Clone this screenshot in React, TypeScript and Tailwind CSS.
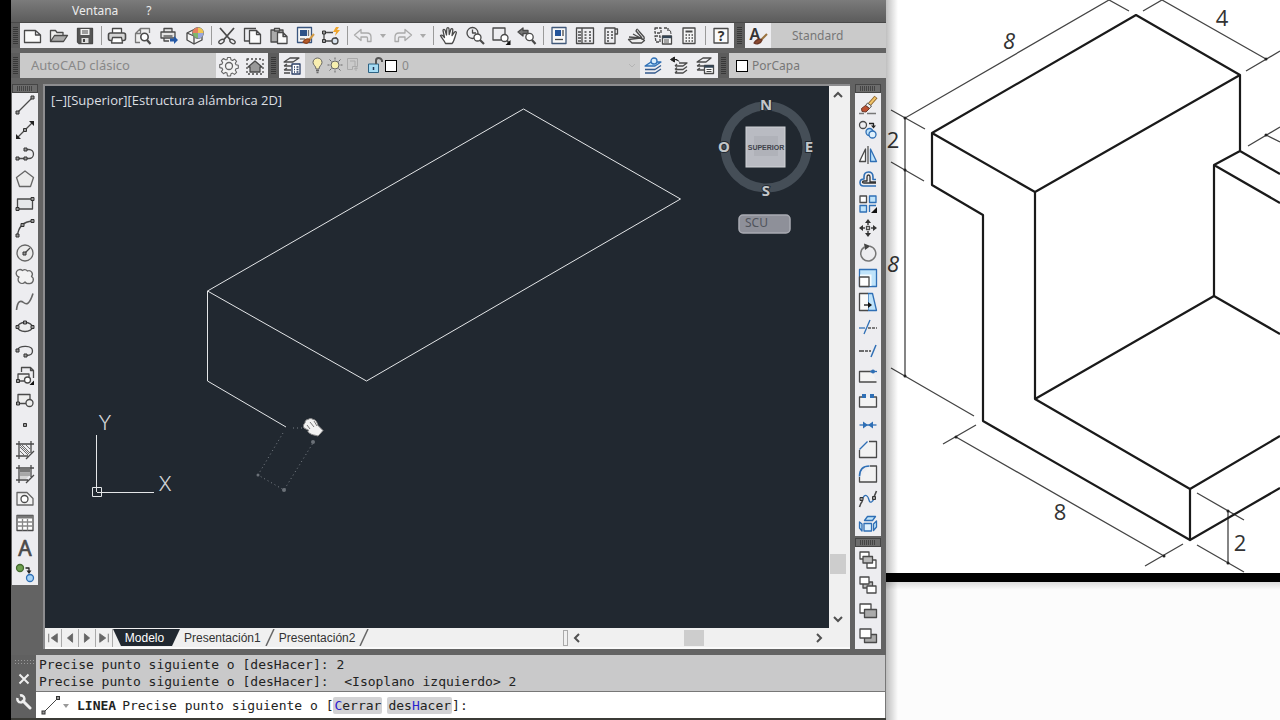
import type { ReactNode } from "react";
import clsx from "clsx";

type Tool = {
  label: string;
  icon: ReactNode;
};

const ink = "#4a4a4a";
const blue = "#2f6fb5";
const sky = "#bfe3fa";

function Node({ x, y }: { x: number; y: number }) {
  return <rect x={x - 1.5} y={y - 1.5} width="3" height="3" fill="#999" stroke="#333" strokeWidth="1" />;
}

function Icon({ children }: { children: ReactNode }) {
  return (
    <svg
      aria-hidden="true"
      viewBox="0 0 20 20"
      className="size-5 shrink-0 overflow-visible"
      fill="none"
      stroke={ink}
      strokeWidth="1.3"
      strokeLinejoin="round"
    >
      {children}
    </svg>
  );
}

const fileTools: Tool[] = [
  {
    label: "Nuevo",
    icon: <path d="M1.500 4.500h11l5 4.500v7.500h-16zM12.500 4.500V9h5" fill="#fafafa" />,
  },
  {
    label: "Abrir",
    icon: (
      <>
        <path d="M1.500 15.500v-11h5l1.500 2h6v3" fill="#eee" />
        <path d="M1.500 15.500l4-6h13l-4 6z" fill="#aaa" />
      </>
    ),
  },
  {
    label: "Guardar",
    icon: (
      <>
        <path d="M2.500 2.500h15v15H4l-1.500-1.500z" fill="#555" />
        <path d="M5.500 3h9v6h-9z" fill="#eee" stroke="none" />
        <path d="M7 5h6M7 7h6" strokeWidth="1" />
        <path d="M6.500 12h7v5h-7z" fill="#ddd" stroke="none" />
        <path d="M8 13h2v3H8z" fill="#444" stroke="none" />
      </>
    ),
  },
];

const printTools: Tool[] = [
  {
    label: "Trazar",
    icon: (
      <>
        <path d="M5.500 7V2.500h9V7" fill="#fff" />
        <rect x="1.500" y="7" width="17" height="7.500" rx="2" fill="#d5d5d5" strokeWidth="1.600" />
        <path d="M5.500 11.500h9l1 5.500h-11z" fill="#fff" />
      </>
    ),
  },
  {
    label: "Vista preliminar",
    icon: (
      <>
        <path d="M7 16.500H2.500v-9l5-5h9V7M2.500 7.500h5v-5" fill="#eee" stroke="#777" />
        <circle cx="11.500" cy="11" r="3.700" fill="#fff" strokeWidth="1.600" />
        <path d="M14 14l3.500 4" strokeWidth="2.200" />
      </>
    ),
  },
  {
    label: "Publicar",
    icon: (
      <>
        <path d="M5 6V2.500h8V6M2 6h14v6H2zM5 12v3h5" fill="#e4e4e4" />
        <path d="M4.500 10h9" />
        <path d="M11 12.500h4V10l4 4-4 4v-2.500h-4z" fill="#2458a6" stroke="none" />
      </>
    ),
  },
  {
    label: "3DDWF",
    icon: (
      <>
        <path d="M2 7l8-4 7 4v7l-8 4-7-4z" fill="#f4f4f4" />
        <path d="M2 7l7 3v8" />
        <circle cx="13" cy="7" r="5.500" fill="#7fb86a" strokeWidth="1" stroke="#777" />
        <path d="M13 7V1.500A5.500 5.500 0 0118.500 7z" fill="#f0c552" stroke="none" />
        <path d="M13 7H7.500A5.500 5.500 0 0113 1.500z" fill="#e77e60" stroke="none" />
        <path d="M13 7h5.500a5.500 5.500 0 01-5.500 5.500z" fill="#9aa6dc" stroke="none" />
      </>
    ),
  },
];

const editTools: Tool[] = [
  {
    label: "Cortar",
    icon: (
      <>
        <path d="M3 2l10.500 12M17 2L6.500 14" strokeWidth="1.800" />
        <ellipse cx="4.500" cy="15.500" rx="3" ry="1.800" transform="rotate(-35 4.500 15.500)" />
        <ellipse cx="15.500" cy="15.500" rx="3" ry="1.800" transform="rotate(35 15.500 15.500)" />
      </>
    ),
  },
  {
    label: "Copiar",
    icon: (
      <>
        <path d="M6 15H1.500V2.500H13" />
        <path d="M6.500 4.500h7l4 4v9h-11zM13.500 4.500v4h4" fill="#fafafa" />
      </>
    ),
  },
  {
    label: "Pegar",
    icon: (
      <>
        <path d="M2 4h12v12H2z" fill="#aaa" />
        <path d="M5.500 2.500h5V5h-5z" fill="#ddd" />
        <path d="M8.500 6.500h5.500l4 4v7H8.500zM14 6.500v4h4" fill="#fafafa" />
      </>
    ),
  },
  {
    label: "Igualar propiedades",
    icon: (
      <>
        <path d="M2.500 1.500h14v15h-14z" fill="#f5f5f5" stroke="#3a567f" />
        <path d="M5 4h7v6H5z" fill="#2e5288" stroke="none" />
        <path d="M13.500 4v6M5 13h5" stroke="#777" />
        <path d="M19 8l-5 6" stroke="#d39a42" strokeWidth="2" />
        <path d="M8 16c2-3 5-4 7-2-1 3-4 4.500-7 2z" fill="#b85d2b" stroke="#91451d" />
      </>
    ),
  },
  {
    label: "Editor de bloques",
    icon: (
      <>
        <path d="M3 15V6.500h9M3 15h9M15 11v2" />
        <Node x={3} y={6.500} />
        <Node x={3} y={15} />
        <circle cx="14" cy="15" r="3" fill="#d9e4ee" />
        <path d="M15 1l-3 5h3l-1 4 5-6h-3l2-3z" fill="#f0a52c" stroke="none" />
      </>
    ),
  },
];

const undoIcon = <path d="M1.500 9l6.500-5.500V7h6q4 0 4 4v4.500h-3.500V12q0-1-1-1H8v3.500z" stroke="#aaa" />;
const redoIcon = <path d="M18.500 9L12 3.500V7H6q-4 0-4 4v4.500h3.500V12q0-1 1-1H12v3.500z" stroke="#aaa" />;

const viewTools: Tool[] = [
  {
    label: "Encuadre",
    icon: (
      <path
        d="M6.500 17.500C5 14 2.500 12 1.500 9.500c1-1 2.500 0 4 2L4 4.500c0-1.500 1.800-1.500 2.200 0L7.500 9 7.800 2.800c.2-1.500 2-1.500 2.200 0l.2 5.700 1.600-5c.5-1.500 2.200-1 2 .5L13 9.500l2.500-3.500c1-1 2.300 0 1.700 1.200C16 10 15.500 15 13 17.500z"
        fill="#fff"
      />
    ),
  },
  {
    label: "Zoom en tiempo real",
    icon: (
      <>
        <circle cx="7.500" cy="7" r="5.500" />
        <path d="M7.500 3.500V7H11" />
        <circle cx="12.500" cy="11.500" r="3.500" fill="#fff" />
        <path d="M15 14l4 4" strokeWidth="2.200" />
      </>
    ),
  },
  {
    label: "Zoom ventana",
    icon: (
      <>
        <path d="M2 2h12v12H2z" />
        <circle cx="13.500" cy="12" r="3.500" fill="#fff" />
        <path d="M16 14.500l1.500 2" strokeWidth="2" />
        <path d="M19.500 14v5h-5z" fill="#111" stroke="none" />
      </>
    ),
  },
  {
    label: "Zoom previo",
    icon: (
      <>
        <path d="M1 6l5-4v2.500h5v3H6V10z" fill="#777" />
        <circle cx="12.500" cy="11" r="3.700" fill="#fff" />
        <path d="M15 14l3.500 4" strokeWidth="2.200" />
      </>
    ),
  },
];

const paletteTools: Tool[] = [
  {
    label: "Propiedades",
    icon: (
      <>
        <path d="M3 1.500h14v16H3z" fill="#f8f8f8" stroke="#41597a" />
        <path d="M6 4h6v6H6z" fill="#23549a" stroke="none" />
        <path d="M14 4v6" />
        <path d="M6 13.500h8" />
      </>
    ),
  },
  {
    label: "DesignCenter",
    icon: (
      <>
        <path d="M1.500 2h17v15.500h-17zM7 2v15.500" />
        <path d="M3 6h3M3 9h3M3 12h3M3 15h3M9.500 6h2M9.500 9h2M9.500 12h2M9.500 15h2M14 6h2M14 9h2M14 12h2M14 15h2" strokeWidth="1.600" />
      </>
    ),
  },
  {
    label: "Paletas de herramientas",
    icon: (
      <>
        <path d="M4 2h10v15.500H4zM14 3h2.500v5H14" />
        <path d="M6 6h2M10 6h2M6 9h2M10 9h2M6 12h2M10 12h2M6 15h2" />
      </>
    ),
  },
  {
    label: "Conjuntos de planos",
    icon: (
      <>
        <path d="M1.500 13.500l12-1.500 4 2.500-3 2.500H5z" fill="#eee" />
        <path d="M2 11l12 1M6 8l9 5M10 3l7 8q1 3-2 2l-5-3" />
        <path d="M10 3l-1 2 6 7" fill="#ccc" />
      </>
    ),
  },
  {
    label: "Marcas de revisión",
    icon: (
      <>
        <path d="M2 2h6v5H2zM11 2h4v4M2 10h5v6H3z" strokeDasharray="3 1" />
        <path d="M9.500 10h9v8h-9z" fill="#fff" />
        <path d="M9.500 11h9" strokeWidth="2.500" stroke="#345" />
        <path d="M11 14h5M11 16h5M16 4q2 0 2 4" strokeWidth="1" />
      </>
    ),
  },
  {
    label: "Calculadora",
    icon: (
      <>
        <path d="M4 2h12v15.500H4z" fill="#f5f5f5" />
        <path d="M6.500 5.500h7" strokeWidth="2" />
        <path d="M6.500 9h1.500M9.500 9h1.500M12.500 9h1.500M6.500 12h1.500M9.500 12h1.500M12.500 12h1.500M6.500 15h1.500M9.500 15h1.500M12.500 15h1.500" strokeWidth="1.600" />
      </>
    ),
  },
];

const layerTools: Tool[] = [
  {
    label: "Definir capa actual",
    icon: (
      <>
        <path d="M2 10h10l6-4H8z" fill={sky} stroke={blue} />
        <path d="M2 13.500h10l6-4M2 17h10l6-4" stroke="#345a8c" />
        <circle cx="11" cy="5" r="3" fill="#d8ecfb" stroke={blue} />
      </>
    ),
  },
  {
    label: "Capa previa",
    icon: (
      <>
        <path d="M6 10h8l4-3h-8M6 10l2-2M6 13.500h8l4-3M6 13.500l2-2M6 17h8l4-3M6 17l2-2" />
        <path d="M1.500 3.500l4-2.500v5zM5 3.500h3l2 2" fill="#222" stroke="#222" strokeWidth="1" />
      </>
    ),
  },
  {
    label: "Estados de capa",
    icon: (
      <>
        <path d="M2 6h9l5-4H8zM2 10h8M2 10l3-2M2 14h7M2 14l3-2" />
        <path d="M9.500 9.500h9v8h-9z" fill="#fff" />
        <path d="M9.500 10.500h9" strokeWidth="2.500" stroke="#345" />
        <path d="M11.500 13.500h5M11.500 15.500h5" strokeWidth="1" />
      </>
    ),
  },
];

const drawTools: Tool[] = [
  {
    label: "Línea",
    icon: (
      <>
        <path d="M2.500 17.500l15-15" />
        <Node x={2.500} y={17.500} />
        <Node x={17.500} y={2.500} />
      </>
    ),
  },
  {
    label: "Línea auxiliar",
    icon: (
      <>
        <path d="M3 17L17 3" />
        <path d="M1 19v-5l5 5zM19 1h-5l5 5z" fill="#222" stroke="none" />
        <Node x={10} y={10} />
      </>
    ),
  },
  {
    label: "Polilínea",
    icon: (
      <>
        <path d="M2.500 14.500h9M11 5.500h3a4.500 4.500 0 010 9h-3" />
        <Node x={2.500} y={14.500} />
        <Node x={10.500} y={14.500} />
        <Node x={10.500} y={5.500} />
      </>
    ),
  },
  { label: "Polígono", icon: <path d="M10 2l8.500 6.500-3 9h-11l-3-9z" fill="#ececec" stroke="#666" /> },
  {
    label: "Rectángulo",
    icon: (
      <>
        <path d="M2.500 5h15v10h-15z" fill="#e6e8ea" />
        <Node x={2.500} y={15} />
        <Node x={17.500} y={5} />
      </>
    ),
  },
  {
    label: "Arco",
    icon: (
      <>
        <path d="M2.500 17.500Q4 4 17.500 3" />
        <Node x={2.500} y={17.500} />
        <Node x={7.500} y={7} />
        <Node x={17.500} y={3} />
      </>
    ),
  },
  {
    label: "Círculo",
    icon: (
      <>
        <circle cx="10" cy="10" r="8" fill="#ebebeb" stroke="#666" />
        <path d="M10 10l5-5" />
        <Node x={9.500} y={10.500} />
      </>
    ),
  },
  {
    label: "Nube de revisión",
    icon: (
      <path
        d="M4 10a3.800 3.800 0 113.500-6.500 3.800 3.800 0 015 .5 3.500 3.500 0 014 5.500 3.800 3.800 0 01-2.500 7 3.800 3.800 0 01-4-1.500A3.800 3.800 0 114 10z"
        fill="#f3f3f3"
        stroke="#666"
      />
    ),
  },
  { label: "Spline", icon: <path d="M1.500 18c1-9 4-10 7-7.500s6 2 9.500-9" stroke="#666" strokeWidth="1.600" /> },
  {
    label: "Elipse",
    icon: (
      <>
        <ellipse cx="10" cy="10" rx="7.500" ry="4.500" fill="#eee" />
        <Node x={2.500} y={10} />
        <Node x={17.500} y={10} />
        <Node x={10} y={5.500} />
      </>
    ),
  },
  {
    label: "Arco elíptico",
    icon: (
      <>
        <path d="M2.500 9c2-5 15-5 15 1 0 3.500-3 4.500-6 4.500" />
        <Node x={2.500} y={9.500} />
        <Node x={10.500} y={14.500} />
      </>
    ),
  },
  {
    label: "Insertar bloque",
    icon: (
      <>
        <path d="M6.500 6V1.500h9l3 3V12M15.500 1.500v3h3" />
        <path d="M3 15V8h11v3M3 15h7" fill="#eee" />
        <Node x={3} y={15} />
        <circle cx="12.500" cy="14" r="3" fill="#fff" />
        <path d="M19 14.500V19h-4.500z" fill="#111" stroke="none" />
      </>
    ),
  },
  {
    label: "Crear bloque",
    icon: (
      <>
        <path d="M3 13.500v-9h12v6M3 13.500h8" fill="#eee" />
        <Node x={3} y={13.500} />
        <circle cx="14.500" cy="13" r="3.500" fill="#eee" />
      </>
    ),
  },
  { label: "Punto", icon: <Node x={10} y={10} /> },
  {
    label: "Sombreado",
    icon: (
      <>
        <path d="M1 4h18M1 16h12M4 1v18M16 1v12" />
        <path d="M5 7l8 8M5 11l4 4M7 5l8 8M11 5l4 4M5 5l9 9" strokeWidth=".8" />
        <path d="M11 19l8-8" />
      </>
    ),
  },
  {
    label: "Degradado",
    icon: (
      <>
        <path d="M5 5h10v3.500H5z" fill="#777" stroke="none" />
        <path d="M5 8.500h10V12H5z" fill="#a8a8a8" stroke="none" />
        <path d="M5 12h9l-3 3H5z" fill="#d5d5d5" stroke="none" />
        <path d="M1 4h18M1 16h12M4 1v18M16 1v12M11 19l8-8" />
      </>
    ),
  },
  {
    label: "Región",
    icon: (
      <>
        <path d="M2 3.500h10l6 6V16H2z" fill="#f2f2f2" stroke="#666" />
        <circle cx="9.500" cy="10" r="3.500" fill="#fff" />
      </>
    ),
  },
  {
    label: "Tabla",
    icon: (
      <>
        <path d="M2 2.500h16v15H2z" fill="#fff" />
        <path d="M2 4h16" strokeWidth="3" stroke="#777" />
        <path d="M2 9h16M2 13h16M7.500 6v11.500M12.500 6v11.500" stroke="#888" />
      </>
    ),
  },
  {
    label: "Texto de líneas múltiples",
    icon: (
      <text x="10" y="18" textAnchor="middle" fill={ink} stroke={ink} strokeWidth=".7" fontSize="21">
        A
      </text>
    ),
  },
  {
    label: "Añadir seleccionado",
    icon: (
      <>
        <circle cx="5" cy="5" r="3.500" fill="#6fa150" stroke="#456b30" />
        <path d="M10.500 5H14v4" stroke="#222" />
        <path d="M11.500 7.500h5L14 11z" fill="#222" stroke="none" />
        <circle cx="15" cy="15" r="3.500" fill="#a9d4f6" stroke={blue} />
      </>
    ),
  },
];

const modifyTools: Tool[] = [
  {
    label: "Borrar",
    icon: (
      <>
        <path d="M18 2l-8 9" stroke="#8d6228" strokeWidth="4" />
        <path d="M17.500 2.500l-7 8" stroke="#f0c46a" strokeWidth="2" />
        <path d="M9.500 8l4 3-2 2.500-4-3z" fill="#eee" stroke="#555" strokeWidth="1" />
        <path d="M7.500 10.500l4 3L8 17l-4-.5-.5-3z" fill="#bd5131" stroke="#6b3828" strokeWidth="1" />
        <path d="M1 18.500h5M9 18.500h9" stroke="#777" />
      </>
    ),
  },
  {
    label: "Copiar objetos",
    icon: (
      <>
        <circle cx="5" cy="5" r="3.500" />
        <path d="M11 3.500h4.500V6" stroke="#222" />
        <path d="M13 5.500h5l-2.500 3z" fill="#222" stroke="none" />
        <circle cx="11.500" cy="12" r="3.500" fill={sky} stroke={blue} />
        <circle cx="14.500" cy="14.500" r="3.500" fill="#e0f1fd" stroke={blue} />
      </>
    ),
  },
  {
    label: "Simetría",
    icon: (
      <>
        <path d="M7.500 4v12.500h-6z" fill="#fff" />
        <path d="M10 1v18" stroke="#555" />
        <path d="M12.500 4v12.500h6z" fill={sky} stroke={blue} />
      </>
    ),
  },
  {
    label: "Desfase",
    icon: (
      <>
        <path d="M18 17H5.500Q2 17 2 13.500T6 10V8q0-5 4.500-5T15 8v2.500h3" stroke={blue} strokeWidth="1.600" />
        <path d="M18 14H6q-1.500 0-1.500-1T6 12h3V8q0-2 1.500-2T12 8v5h6" stroke="#333" />
      </>
    ),
  },
  {
    label: "Matriz",
    icon: (
      <>
        <path d="M2 2h6.500v6.500H2z" fill="#fff" />
        <path d="M11.500 2H18v6.500h-6.500zM2 11.500h6.500V18H2z" fill={sky} stroke={blue} />
        <path d="M11.500 18v-6.500H18" stroke={blue} />
        <path d="M19 13v6h-6z" fill="#111" stroke="none" />
      </>
    ),
  },
  {
    label: "Desplazar",
    icon: (
      <>
        <path d="M10 4v3M10 13v3M4 10h3M13 10h3" strokeWidth="1.600" />
        <path d="M10 1l3 4H7zM10 19l3-4H7zM1 10l4-3v6zM19 10l-4-3v6z" fill="#333" stroke="none" />
        <path d="M8.500 8.500h3v3h-3z" fill="#fff" />
      </>
    ),
  },
  {
    label: "Girar",
    icon: (
      <>
        <path d="M12 3.200A7.500 7.500 0 116.500 4" stroke="#777" strokeWidth="1.500" />
        <path d="M6 .5L12.500 3 7 7z" fill="#444" stroke="none" />
      </>
    ),
  },
  {
    label: "Escala",
    icon: (
      <>
        <path d="M1.500 1.500h17v17h-17z" fill={sky} stroke={blue} />
        <path d="M2 6.500h11.500V18H2z" fill="#f4fbff" stroke="none" />
        <path d="M1.500 9h9.500v9.500H1.500z" fill="#fff" />
      </>
    ),
  },
  {
    label: "Estirar",
    icon: (
      <>
        <path d="M10 1.500h4.500l4 17H10z" fill={sky} stroke={blue} />
        <path d="M10 1.500H1.500v17H10" fill="#fafafa" />
        <path d="M6 13h5" stroke="#111" />
        <path d="M10 10l4 3-4 3z" fill="#111" stroke="none" />
      </>
    ),
  },
  {
    label: "Recortar",
    icon: (
      <>
        <path d="M6 17l6-14" stroke={blue} />
        <path d="M1 11h6" stroke={blue} />
        <path d="M10 11h9" stroke="#555" strokeDasharray="3 1" />
      </>
    ),
  },
  {
    label: "Alargar",
    icon: (
      <>
        <path d="M1 10h5" strokeWidth="1.600" />
        <path d="M7 10h6" strokeDasharray="3 1" />
        <path d="M13 16l5-12" stroke={blue} strokeWidth="1.500" />
      </>
    ),
  },
  {
    label: "Partir en un punto",
    icon: (
      <>
        <path d="M18.500 16H1.500V5.500H14" fill="#f3f3f3" />
        <path d="M12 5.500h7" stroke={blue} />
        <circle cx="15" cy="5.500" r="2" fill={blue} stroke="none" />
      </>
    ),
  },
  {
    label: "Partir",
    icon: (
      <>
        <path d="M4 6H1.500v10h17V6H16" fill="#f3f3f3" />
        <path d="M4 3h4v4H4zM12 3h4v4h-4z" fill={blue} stroke="none" />
      </>
    ),
  },
  {
    label: "Juntar",
    icon: (
      <>
        <path d="M1.500 10h17" stroke={blue} />
        <path d="M5 6.500l5 3.500-5 3.500zM15 6.500L10 10l5 3.500z" fill={blue} stroke="none" />
      </>
    ),
  },
  {
    label: "Chaflán",
    icon: (
      <>
        <path d="M11 1.500h7.500v16h-17V10" fill="#f2f2f2" />
        <path d="M1.500 9.500l8-8" stroke={blue} />
      </>
    ),
  },
  {
    label: "Empalme",
    icon: (
      <>
        <path d="M12 2h6.500v16h-17v-5" fill="#f2f2f2" />
        <path d="M1.500 12.500C1.500 6 5 2 11.500 2" stroke={blue} strokeWidth="1.600" />
      </>
    ),
  },
  {
    label: "Fusionar curvas",
    icon: (
      <>
        <path d="M4 11c3-8 6-4 7 0s4 2 5-2" stroke={blue} />
        <path d="M1.500 18c1-3 2-5 3-6M16 8l2.500-6" strokeWidth="1.600" />
        <Node x={3.500} y={10} />
        <Node x={16} y={9} />
      </>
    ),
  },
  {
    label: "Descomponer",
    icon: (
      <g stroke={blue} fill={sky}>
        <path d="M6 9.500h7.500V17H6z" fill="#e0f1fd" />
        <path d="M6.500 6.500l3-4h8l-3 4zM15.500 10L18.500 7v6l-3 3.500zM4 10L1.500 8v6L4 17z" />
      </g>
    ),
  },
];

const orderTools: Tool[] = [
  {
    label: "Traer al frente",
    icon: (
      <>
        <path d="M2 2h9v7H2zM9 10h9v8H9z" fill="#fff" />
        <path d="M5 6.500h9.500V13H5z" fill="#bbb" />
      </>
    ),
  },
  {
    label: "Enviar al fondo",
    icon: (
      <>
        <path d="M5 7h9.500v6H5z" fill="#bbb" />
        <path d="M2 2h9v7H2zM9 11h9v7H9z" fill="#fff" />
      </>
    ),
  },
  {
    label: "Poner delante del objeto",
    icon: (
      <>
        <path d="M2 3h11v9H2z" fill="#fff" />
        <path d="M6.500 8.500h12v8h-12z" fill="#aaa" />
      </>
    ),
  },
  {
    label: "Poner detrás del objeto",
    icon: (
      <>
        <path d="M6.500 8.500h12v8h-12z" fill="#aaa" />
        <path d="M2 3h11v9H2z" fill="#fff" />
      </>
    ),
  },
];

function ToolButton({ tool, fill }: { tool: Tool; fill?: boolean }) {
  return (
    <button
      type="button"
      aria-label={tool.label}
      className={clsx("flex w-[26px] items-center justify-center", fill ? "min-h-0 flex-1" : "h-full shrink-0")}
    >
      <Icon>{tool.icon}</Icon>
    </button>
  );
}

function ToolGroup({ tools }: { tools: Tool[] }) {
  return (
    <div className="flex h-full">
      {tools.map((tool) => (
        <ToolButton key={tool.label} tool={tool} />
      ))}
    </div>
  );
}

function Separator() {
  return (
    <div className="flex h-full w-[6px] shrink-0 justify-center py-[3px]">
      <div className="w-px bg-[#9a9a9a]" />
    </div>
  );
}

function Grip({ className }: { className?: string }) {
  return (
    <div className={clsx("flex shrink-0 items-center justify-center bg-[#5c5c5c]", className)}>
      <div className="h-[17px] w-[5px] bg-[repeating-linear-gradient(#383838_0_1px,#5c5c5c_1px_2px)]" />
    </div>
  );
}

function TopGrip() {
  return (
    <div className="flex h-[9px] shrink-0 items-center justify-center border border-[#454545] bg-[#6c6c6c]">
      <div className="h-[5px] w-4 bg-[repeating-linear-gradient(90deg,#444_0_1px,#6c6c6c_1px_2px)]" />
    </div>
  );
}

function HistoryArrow({ label }: { label: string }) {
  return (
    <button type="button" aria-label={label} className="flex h-full w-[14px] shrink-0 items-center justify-center">
      <svg viewBox="0 0 6 4" className="h-1 w-[6px]">
        <path d="M0 0h6L3 4z" fill="#aaa" />
      </svg>
    </button>
  );
}

function MenuBar() {
  return (
    <nav className="flex h-[23px] items-center gap-[28px] border-b border-[#484848] bg-linear-to-b from-[#7b7b7b] to-[#5c5c5c] pl-[61px] text-[12px] leading-5 text-[#ececec]">
      <button type="button">Ventana</button>
      <button type="button">?</button>
    </nav>
  );
}

function StandardToolbar() {
  return (
    <div className="flex h-[25px] bg-[#ededf0]">
      <Grip className="w-[9px]" />
      <ToolGroup tools={fileTools} />
      <Separator />
      <ToolGroup tools={printTools} />
      <Separator />
      <ToolGroup tools={editTools} />
      <Separator />
      <ToolButton tool={{ label: "Deshacer", icon: undoIcon }} />
      <HistoryArrow label="Lista de deshacer" />
      <ToolButton tool={{ label: "Rehacer", icon: redoIcon }} />
      <HistoryArrow label="Lista de rehacer" />
      <Separator />
      <ToolGroup tools={viewTools} />
      <Separator />
      <ToolGroup tools={paletteTools} />
      <Separator />
      <ToolButton
        tool={{
          label: "Ayuda",
          icon: (
            <>
              <path d="M3 2.500h14v14.500H3z" fill="#fafafa" />
              <text x="10" y="15" textAnchor="middle" fontSize="14" fontWeight="700" fill="#333" stroke="none">
                ?
              </text>
            </>
          ),
        }}
      />
      <Grip className="w-[11px]" />
      <ToolButton
        tool={{
          label: "Estilo de texto",
          icon: (
            <>
              <text x="7" y="14" textAnchor="middle" fontSize="16" fontWeight="600" fill="#333" stroke="none">
                A
              </text>
              <path d="M19 8l-6 6" stroke="#9a7340" strokeWidth="2" />
              <path d="M6 17c2-3 5-5 8-3-1 3-5 5-8 3z" fill="#8c4a30" stroke="#6b3828" />
            </>
          ),
        }}
      />
      <select
        aria-label="Estilo de texto actual"
        className="min-w-0 flex-1 appearance-none bg-[#cacaca] pl-[21px] text-[12px] text-[#777]"
      >
        <option>Standard</option>
      </select>
    </div>
  );
}

function LayerToolbar() {
  return (
    <div className="flex h-[25px] bg-[#ededf0]">
      <Grip className="w-[9px]" />
      <select
        aria-label="Espacio de trabajo"
        className="w-[196px] shrink-0 appearance-none bg-[#cacaca] pl-[11px] text-[13px] text-[#888]"
      >
        <option>AutoCAD clásico</option>
      </select>
      <ToolGroup
        tools={[
          {
            label: "Parámetros del espacio de trabajo",
            icon: (
              <>
                <path
                  d="M8.500 1.500h3l.5 2.300 1.500.7 2-1.300 2.100 2.100-1.300 2 .7 1.500 2.300.5v3l-2.300.5-.7 1.500 1.300 2-2.100 2.100-2-1.300-1.500.7-.5 2.200h-3L8 17.100l-1.500-.7-2 1.300-2.100-2.100 1.300-2-.7-1.500-2.300-.5v-3L3 8.100l.7-1.500-1.300-2 2.100-2.100 2 1.300L8 3.800z"
                  fill="#f4f4f4"
                  stroke="#666"
                  strokeWidth="1.100"
                />
                <circle cx="10" cy="10" r="3.500" stroke="#666" />
              </>
            ),
          },
          {
            label: "Mi espacio de trabajo",
            icon: (
              <>
                <path d="M2 3h16v15H2z" strokeDasharray="2 2" />
                <path d="M3 11l7-6 7 6h-2v5H5v-5z" fill="#999" />
              </>
            ),
          },
        ]}
      />
      <Grip className="w-[11px]" />
      <ToolButton
        tool={{
          label: "Propiedades de capas",
          icon: (
            <>
              <path d="M2 6h9l6-4H8zM2 10h8M2 14h7M2 10l3-2M2 14l3-2M2 17h6" />
              <path d="M10 8h8v10h-8z" fill="#fff" stroke="#2b3f66" />
              <path d="M12 11h1M14.500 11h2M12 13.500h1M14.500 13.500h2M12 16h1M14.500 16h2" stroke="#2b3f66" />
            </>
          ),
        }}
      />
      <div className="flex min-w-0 flex-1 items-center bg-[#cacaca] pl-[3px]">
        <svg aria-hidden="true" viewBox="0 0 77 20" className="h-5 w-[77px] shrink-0" fill="none" stroke="#666">
          <path d="M8 13c0-3-3-4-3-6.500a4.500 4.500 0 019 0C14 9 11 10 11 13z" fill="#f8eeb0" />
          <path d="M8 14.500h3M8.500 16.500h2" strokeWidth="1.500" />
          <circle cx="27" cy="9" r="4" fill="#f6efae" />
          <path d="M27 1.500v2M27 14.500v2M19.500 9h2M32.500 9h2M21.500 3.500l2 2M30.500 12.500l2 2M21.500 14.500l2-2M32.500 3.500l-2 2" />
          <path d="M39.500 2.500h10v8h-5v3h-5zM42 5h5v5M48 10v5M46 13l4-1" stroke="#aaa" />
          <path d="M60.500 8h10v8.500h-10z" fill="#a6dcf4" stroke="#2d6384" />
          <path d="M68 8V4.500Q68 2 70.500 2T74 4.500V6" strokeWidth="2" stroke="#555" />
          <path d="M65.500 11v3" stroke="#235" strokeWidth="1.500" />
        </svg>
        <div className="size-3 shrink-0 border border-black bg-white" />
        <select
          aria-label="Capa actual"
          className="h-full min-w-0 flex-1 appearance-none pl-[5px] text-[12px] text-[#888]"
        >
          <option>0</option>
        </select>
        <svg aria-hidden="true" viewBox="0 0 8 5" className="mr-1 h-[5px] w-2" fill="none">
          <path d="M1 1l3 3 3-3" stroke="#b4b4b4" />
        </svg>
      </div>
      <ToolGroup tools={layerTools} />
      <Grip className="w-[11px]" />
      <div className="flex w-[157px] shrink-0 items-center bg-[#cacaca] pl-[7px]">
        <div className="size-3 border border-black bg-white" />
        <select
          aria-label="Color"
          className="h-full min-w-0 flex-1 appearance-none pl-[4px] text-[12px] text-[#777]"
        >
          <option>PorCapa</option>
        </select>
      </div>
    </div>
  );
}

function ViewCube() {
  return (
    <div className="absolute top-2 right-3 w-[100px]">
      <svg viewBox="0 0 100 142" className="w-full font-['Noto_Sans',sans-serif]">
        <circle cx="49" cy="53" r="41" fill="none" stroke="#454e57" strokeWidth="9" />
        <g fill="#c3c6c9" fontSize="15" fontWeight="700" textAnchor="middle" stroke="#212830" strokeWidth="2" paintOrder="stroke">
          <text x="49" y="16">N</text>
          <text x="49" y="102">S</text>
          <text x="7" y="58">O</text>
          <text x="92" y="58">E</text>
        </g>
        <rect x="29" y="33" width="39" height="40" fill="#b9bbc2" stroke="#d0d2d6" />
        <rect x="37" y="42" width="24" height="20" fill="#b0b2b9" />
        <text x="49" y="56" textAnchor="middle" fontSize="7" fontWeight="700" fill="#3f434b" className="font-['Liberation_Sans',sans-serif]">
          SUPERIOR
        </text>
        <rect x="22" y="121" width="51" height="18" rx="4" fill="#8e9099" stroke="#a9abb2" strokeWidth="1.500" />
        <text x="28" y="133" fontSize="12" fill="#50545c">
          SCU
        </text>
      </svg>
    </div>
  );
}

function ModelSpace() {
  return (
    <div className="relative min-w-0 flex-1 overflow-hidden bg-[#212830]">
      <svg aria-hidden="true" className="absolute inset-0 size-full" fill="none" stroke="#e4e6e8" strokeWidth="1">
        <path d="M162.500 205L478.500 23l157 90-314 182zv90l78.500 46" />
        <g stroke="#7a8087" strokeDasharray="1 3">
          <path d="M238 347l-25 42 26 15 29-47M248 342h12" />
        </g>
        <g fill="#6b7178" stroke="none">
          <circle cx="213" cy="389" r="1.500" />
          <circle cx="239" cy="404" r="2" />
          <circle cx="268" cy="356" r="2" />
        </g>
        <path
          d="M260 345c-1-2-.5-4 1-5 0-2 1-3.500 3-3.500 2-1.500 4-1 5 0 3 0 4 3 5 6l5 5c-2 2-3 4-5 5.500-3-1-6-1-8-2.500-2-1-3-3-1-3z"
          transform="translate(-1 -3)"
          fill="#f2f2f2"
          stroke="#888"
        />
        <path d="M262 339l3 4M265 336l4 5M269 335l3 5" stroke="#777" />
        <path d="M47.500 401.500h9v9h-9zM51.500 406V349M52 406.500h57" />
        <g fill="#cfd2d5" stroke="none" fontSize="20" fontWeight="300" className="font-['Inter',sans-serif]">
          <text x="60" y="344" textAnchor="middle">Y</text>
          <text x="120" y="405" textAnchor="middle">X</text>
        </g>
      </svg>
      <p className="relative pt-1 pl-[6px] font-['Open_Sans',sans-serif] text-[13px] leading-5 text-[#dcdfe2]">
        [−][Superior][Estructura alámbrica 2D]
      </p>
      <ViewCube />
    </div>
  );
}

function Chevron({ label, d }: { label: string; d: string }) {
  return (
    <button type="button" aria-label={label} className="flex size-[18px] shrink-0 items-center justify-center">
      <svg viewBox="0 0 10 10" className="size-[10px]" fill="none" stroke="#505050" strokeWidth="2">
        <path d={d} />
      </svg>
    </button>
  );
}

function TabEdge() {
  return (
    <svg aria-hidden="true" viewBox="0 0 10 17" className="h-[17px] w-[10px] shrink-0" fill="none">
      <path d="M1 17L9 0" stroke="#666" strokeWidth="1.500" />
    </svg>
  );
}

const pageButtons = [
  { label: "Primera", d: "M2 2v10M12 2v10L5 7z" },
  { label: "Anterior", d: "M10 2v10L4 7z" },
  { label: "Siguiente", d: "M4 2v10l6-5z" },
  { label: "Última", d: "M12 2v10M2 2v10l7-5z" },
];

function LayoutTabs() {
  return (
    <div className="flex h-[21px] border-b-2 border-[#fafafa] bg-[#f0f0f0] pt-px font-['Liberation_Sans',sans-serif] text-[12px] leading-4 text-[#333]">
      {pageButtons.map((button) => (
        <button
          key={button.label}
          type="button"
          aria-label={button.label}
          className="flex w-[17px] shrink-0 items-center justify-center border-r border-[#aaa]"
        >
          <svg viewBox="0 0 14 14" className="size-3" fill="#666" stroke="#666">
            <path d={button.d} />
          </svg>
        </button>
      ))}
      <button
        type="button"
        className="h-[17px] w-[67px] shrink-0 bg-[#212830] pr-1 text-center text-white [clip-path:polygon(0_0,100%_0,calc(100%-8px)_100%,8px_100%)]"
      >
        Modelo
      </button>
      <div className="flex h-[17px] items-center">
        <button type="button" className="px-1">
          Presentación1
        </button>
        <TabEdge />
        <button type="button" className="px-1">
          Presentación2
        </button>
        <TabEdge />
      </div>
      <div className="flex-1" />
      <div className="flex w-[287px] shrink-0 items-center">
        <div className="h-4 w-[5px] border border-[#aaa]" />
        <Chevron label="Desplazar a la izquierda" d="M7 1L3 5l4 4" />
        <div className="flex h-4 flex-1 justify-center pr-2">
          <div className="w-5 bg-[#cdcdcd]" />
        </div>
        <Chevron label="Desplazar a la derecha" d="M3 1l4 4-4 4" />
        <div className="w-[22px]" />
      </div>
    </div>
  );
}

function DrawingFrame() {
  return (
    <div className="flex min-w-0 flex-1 flex-col border-t-2 border-l-2 border-[#8d8d8f]">
      <div className="flex flex-1">
        <ModelSpace />
        <div className="flex w-[21px] shrink-0 flex-col items-start bg-[#f0f0f0]">
          <Chevron label="Desplazar hacia arriba" d="M1 7l4-4 4 4" />
          <div className="flex-1" />
          <div className="mb-[36px] ml-px h-5 w-4 bg-[#cdcdcd]" />
          <Chevron label="Desplazar hacia abajo" d="M1 3l4 4 4-4" />
        </div>
      </div>
      <LayoutTabs />
    </div>
  );
}

function CommandLine() {
  return (
    <div className="flex h-[65px] border-b-2 border-[#3b3b36] font-['DejaVu_Sans_Mono',monospace] text-[13px] leading-[17px] text-[#222]">
      <div className="flex w-[25px] shrink-0 flex-col items-center justify-between bg-[#606060] pt-1 pb-2">
        <div className="h-[5px] w-5 bg-[radial-gradient(#999_1px,transparent_1px)] bg-size-[3px_3px]" />
        <button type="button" aria-label="Cerrar línea de comandos">
          <svg viewBox="0 0 12 12" className="size-3" stroke="#eee" strokeWidth="2">
            <path d="M1.500 1.500l9 9M10.500 1.500l-9 9" />
          </svg>
        </button>
        <button type="button" aria-label="Personalizar">
          <svg viewBox="0 0 16 16" className="size-4" fill="none" stroke="#eee">
            <path d="M7 7l7 7" strokeWidth="3" strokeLinecap="round" />
            <path d="M4 1.500A3.500 3.500 0 111.500 4" strokeWidth="2.500" />
          </svg>
        </button>
      </div>
      <div className="flex min-w-0 flex-1 flex-col border-r border-[#777]">
        <div className="h-[37px] border-b border-[#777] bg-[#c9c9ca] pt-px pl-[3px] whitespace-pre">
          <p>Precise punto siguiente o [desHacer]: 2</p>
          <p>{"Precise punto siguiente o [desHacer]:  <Isoplano izquierdo> 2"}</p>
        </div>
        <div className="flex flex-1 items-center bg-white pl-[5px]">
          <svg aria-hidden="true" viewBox="0 0 28 20" className="h-5 w-7 shrink-0" fill="none" stroke="#444">
            <path d="M2 18L17 3" />
            <Node x={17} y={3} />
            <Node x={2.500} y={17.500} />
            <path d="M22 9h6l-3 4z" fill="#999" stroke="none" />
          </svg>
          <label htmlFor="command" className="ml-2 flex shrink-0 gap-[6px]">
            <b>LINEA</b>
            <span>Precise punto siguiente o [</span>
          </label>
          <button type="button" className="rounded-xs bg-[#d2d2d4] px-px">
            <span className="text-[#2a22d0]">C</span>errar
          </button>
          <button type="button" className="ml-[5px] rounded-xs bg-[#d2d2d4] px-px">
            des<span className="text-[#2a22d0]">H</span>acer
          </button>
          <span>]:</span>
          <input id="command" className="min-w-0 flex-1 outline-none" />
        </div>
      </div>
    </div>
  );
}

function IsometricSheet() {
  return (
    <svg viewBox="886 0 394 573" className="w-full bg-white font-['Open_Sans',sans-serif]" fill="none">
      <g stroke="#444" strokeWidth="1.300">
        <path d="M1129 11l-20-11L905 118v258M891 110l34 19M891 162l33 19" />
        <path d="M1143 11l19-11 104 59M1246 71l34-20M1248 146l32-19M1266 135l14 7" />
        <path d="M891 368l83 48M956 437l208 119M943 444l33-19M1145 566l38-22" />
        <path d="M1197 493l47 27M1197 545l47 27M1228 511v52" />
      </g>
      <g fill="#222">
        <circle cx="905" cy="118" r="1.500" />
        <circle cx="905" cy="170" r="1.500" />
        <circle cx="905" cy="376" r="1.500" />
        <circle cx="1266" cy="59" r="1.500" />
        <circle cx="1266" cy="135" r="1.500" />
        <circle cx="956" cy="437" r="1.500" />
        <circle cx="1164" cy="556" r="1.500" />
        <circle cx="1228" cy="511" r="1.500" />
        <circle cx="1228" cy="563" r="1.500" />
      </g>
      <g stroke="#1a1a1a" strokeWidth="2.200" strokeLinejoin="round">
        <path d="M932 133l204-118 104 60-205 117zv52l51 30v206l207 119v-51l-155-90V192" />
        <path d="M1035 399l179-103 66 38M1190 489l90-53M1190 540l90-52" />
        <path d="M1240 75v76l-26 14v131M1240 151l40 23M1214 165l66 38" />
      </g>
      <g fill="#333" fontSize="22" textAnchor="middle">
        <text x="1009" y="49" fontStyle="italic">8</text>
        <text x="1222" y="26">4</text>
        <text x="893" y="148">2</text>
        <text x="893" y="272" fontStyle="italic">8</text>
        <text x="1060" y="520">8</text>
        <text x="1240" y="551">2</text>
      </g>
    </svg>
  );
}

export default function App() {
  return (
    <div className="grid min-h-screen grid-cols-[886fr_394fr] bg-black font-['Noto_Sans',sans-serif]">
      <main className="ml-[11px] flex min-w-0 flex-col bg-[#636363]">
        <MenuBar />
        <div className="flex flex-col gap-[5px]">
          <StandardToolbar />
          <LayerToolbar />
        </div>
        <div className="flex flex-1 gap-[5px] px-px pt-[6px] pb-[6px]">
          <aside className="flex w-[26px] shrink-0 flex-col">
            <TopGrip />
            <div className="flex h-[492px] flex-col bg-[#ededf0]">
              {drawTools.map((tool) => (
                <ToolButton key={tool.label} tool={tool} fill />
              ))}
            </div>
          </aside>
          <DrawingFrame />
          <aside className="mr-1 flex w-[26px] shrink-0 flex-col">
            <TopGrip />
            <div className="flex h-[443px] flex-col bg-[#ededf0]">
              {modifyTools.map((tool) => (
                <ToolButton key={tool.label} tool={tool} fill />
              ))}
            </div>
            <div className="pt-[2px]">
              <TopGrip />
            </div>
            <div className="flex min-h-[98px] flex-1 flex-col bg-[#ededf0]">
              {orderTools.map((tool) => (
                <ToolButton key={tool.label} tool={tool} fill />
              ))}
            </div>
          </aside>
        </div>
        <CommandLine />
      </main>
      <section aria-label="Lámina isométrica" className="relative flex min-w-0 flex-col bg-[#fcfcfc]">
        <IsometricSheet />
        <div className="h-[9px] bg-black" />
        <div className="h-2 bg-linear-to-b from-[#dcdcdc] to-[#fcfcfc]" />
        <div className="pointer-events-none absolute inset-y-0 left-0 w-3 bg-linear-to-r from-black/25 to-transparent" />
      </section>
    </div>
  );
}
